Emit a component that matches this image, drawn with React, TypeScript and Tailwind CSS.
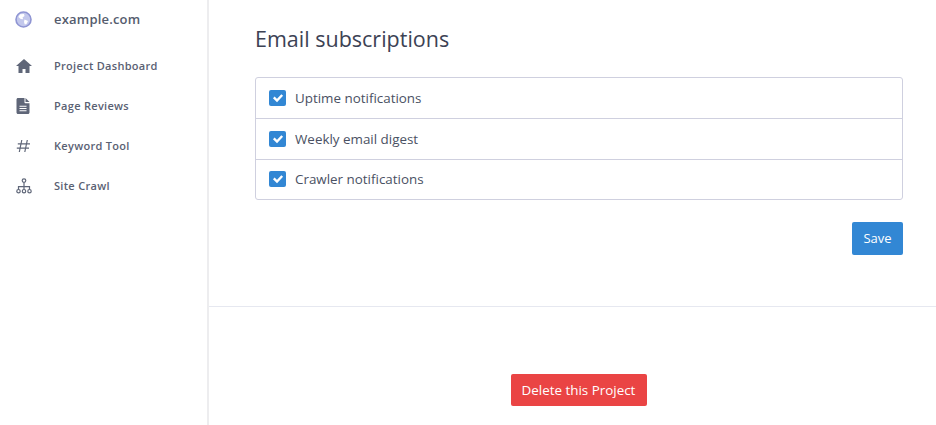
const font = { fontFamily: '"Open Sans", sans-serif' };

function Globe() {
  return (
    <svg width="17" height="17" viewBox="0 0 17 17">
      <circle cx="8.5" cy="8.5" r="7.5" fill="#c3c8ec" stroke="#8f95d3" strokeWidth="1.6" />
      <path d="M5 3.2 L9 3 L9.5 5 L7.5 6.5 L8.2 8.2 L5.8 8 L3.4 6 Z" fill="#fff" />
      <path d="M9.5 8.5 L13 10 L11.5 13 L9.8 13.6 L9 11 Z" fill="#fff" />
    </svg>
  );
}

function HomeIcon() {
  return (
    <svg width="16" height="14" viewBox="0 0 16 14">
      <path d="M8 0 16 7H13.500V14H9.500V10H6.500V14H2.500V7H0Z" fill="#5f6678" />
    </svg>
  );
}

function FileIcon() {
  return (
    <svg width="14" height="16" viewBox="0 0 14 16">
      <path d="M1.5 0H8v4.5c0 .4.3.7.7.7H13v9.3c0 .8-.7 1.5-1.5 1.5h-10C.7 16 0 15.300 0 14.500V1.500C0 .7.7 0 1.500 0Z" fill="#5f6678" transform="translate(.5 0)" />
      <path d="M9.500 0 13.500 4H9.500Z" fill="#5f6678" />
      <path d="M3.500 8.300h7M3.500 10.500h7M3.500 12.700h7" stroke="#fff" strokeWidth="1.100" />
    </svg>
  );
}

function HashIcon() {
  return (
    <svg width="15" height="14" viewBox="0 0 15 14" fill="none" stroke="#5f6678" strokeWidth="1.200">
      <path d="M5.800 1 3.300 13M11.300 1 8.800 13M1.800 4.800H14M.8 9.200H13" />
    </svg>
  );
}

function Sitemap() {
  return (
    <svg width="16" height="16" viewBox="0 0 16 16" fill="none" stroke="#5f6678" strokeWidth="1.200">
      <circle cx="8" cy="2.600" r="1.800" />
      <path d="M8 4.400V9M2.500 11.500V8.700H13.500V11.500M8 8.700V11.500" />
      <circle cx="2.500" cy="13.200" r="1.700" />
      <circle cx="8" cy="13.200" r="1.700" />
      <circle cx="13.500" cy="13.200" r="1.700" />
    </svg>
  );
}

const nav = [
  { label: "Project Dashboard", icon: <HomeIcon /> },
  { label: "Page Reviews", icon: <FileIcon /> },
  { label: "Keyword Tool", icon: <HashIcon /> },
  { label: "Site Crawl", icon: <Sitemap /> },
];

const subs = ["Uptime notifications", "Weekly email digest", "Crawler notifications"];

export default function App() {
  return (
    <div style={font} className="flex h-[425px] w-[936px] overflow-hidden bg-white">
      <aside className="h-full w-[209px] shrink-0 border-r-2 border-[#ededef]">
        <div className="flex h-[39px] items-center pl-[15px]">
          <span className="flex w-[39px] shrink-0"><Globe /></span>
          <span className="text-[13px] font-semibold tracking-[0.2px] text-[#555c6e]">example.com</span>
        </div>
        <nav className="mt-[7px] flex flex-col">
          {nav.map((n) => (
            <div key={n.label} className="flex h-10 items-center pl-[15px]">
              <span className="flex w-[39px] shrink-0 pl-px">{n.icon}</span>
              <span className="text-[11px] font-semibold tracking-[0.3px] text-[#5a6173]">{n.label}</span>
            </div>
          ))}
        </nav>
      </aside>
      <main className="flex-1">
        <section className="h-[307px] border-b border-[#e6e8f0] pl-[46px] pr-[33px]">
          <h1 className="pt-[24px] text-[21.5px] leading-[30px] text-[#3c4254]">Email subscriptions</h1>
          <div className="mt-[23px] rounded-[3px] border border-[#cfd0df]">
            {subs.map((s, i) => (
              <label key={s} className={`flex h-[40.330px] items-center pl-[13px] ${i > 0 ? "border-t border-[#cfd0df]" : ""}`}>
                <span className="mr-[9px] flex h-4 w-[17px] items-center justify-center rounded-[2px] bg-[#3287d4]">
                  <svg width="12" height="10" viewBox="0 0 12 10" fill="none" stroke="#fff" strokeWidth="2.400">
                    <path d="M1.800 4.400 5 7.500 10.200 2" />
                  </svg>
                </span>
                <span className="text-[13.400px] text-[#4a5163]">{s}</span>
              </label>
            ))}
          </div>
          <div className="mt-[22px] flex justify-end">
            <button className="h-[33px] w-[51px] rounded-[2px] bg-[#3287d4] text-[13px] text-white">Save</button>
          </div>
        </section>
        <div className="flex justify-center pt-[67px] pl-[12px]">
          <button className="h-8 w-[136px] rounded-[2px] bg-[#ea4444] text-[13.400px] text-white">Delete this Project</button>
        </div>
      </main>
    </div>
  );
}
